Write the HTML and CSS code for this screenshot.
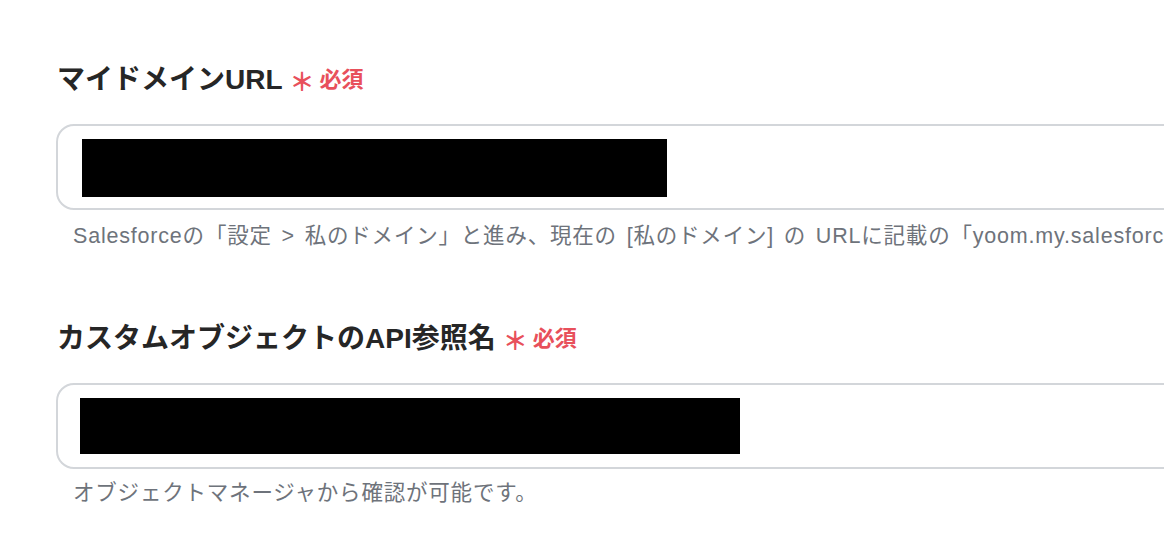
FILE: index.html
```html
<!DOCTYPE html>
<html lang="ja">
<head>
<meta charset="utf-8">
<link rel="stylesheet" href="styles.css">
</head>
<body>
<main class="form">
  <section class="field">
    <div class="label">マイドメインURL<span class="req"><span class="star">＊</span>必須</span></div>
    <div class="input"><div class="redact redact-1"></div></div>
    <p class="help">Salesforceの「設定 &gt; 私のドメイン」と進み、現在の [私のドメイン] の URLに記載の「yoom.my.salesforce.com」の「yoom」部分を入力してください。</p>
  </section>
  <section class="field">
    <div class="label">カスタムオブジェクトのAPI参照名<span class="req"><span class="star">＊</span>必須</span></div>
    <div class="input"><div class="redact redact-2"></div></div>
    <p class="help">オブジェクトマネージャから確認が可能です。</p>
  </section>
</main>
</body>
</html>
```
FILE: styles.css
```css
html, body {
  margin: 0;
  padding: 0;
  background: #ffffff;
  overflow: hidden;
}
body {
  font-family: "Liberation Sans", "Noto Sans CJK JP", sans-serif;
  width: 1164px;
  height: 548px;
}
.form {
  padding: 60px 0 0 56px;
  display: flex;
  flex-direction: column;
  gap: 66px;
}
.field {
  display: flex;
  flex-direction: column;
}
.label {
  font-size: 28px;
  line-height: 40px;
  font-weight: 700;
  color: #262626;
  padding-left: 1px;
  white-space: nowrap;
  display: flex;
  align-items: center;
}
.req {
  color: #e8505b;
  font-size: 22px;
  font-weight: 700;
  margin-left: 7px;
  display: inline-flex;
  align-items: center;
}
.star {
  font-size: 25px;
  font-weight: 700;
  margin-right: 5px;
  position: relative;
  top: 2px;
}
.input {
  margin-top: 24px;
  width: 1200px;
  height: 86px;
  box-sizing: border-box;
  border: 2px solid #d3d6da;
  border-radius: 18px;
  display: flex;
  align-items: flex-start;
}
.redact {
  background: #000;
}
.redact-1 {
  margin: 13px 0 0 24px;
  width: 585px;
  height: 58px;
}
.redact-2 {
  margin: 13px 0 0 22px;
  width: 660px;
  height: 56px;
}
.help {
  margin: 9px 0 0 17px;
  font-size: 21.5px;
  letter-spacing: 0.8px;
  word-spacing: 3px;
  line-height: 34px;
  color: #6e737b;
  white-space: nowrap;
}
.field + .field .help {
  margin-top: 7px;
}
```
